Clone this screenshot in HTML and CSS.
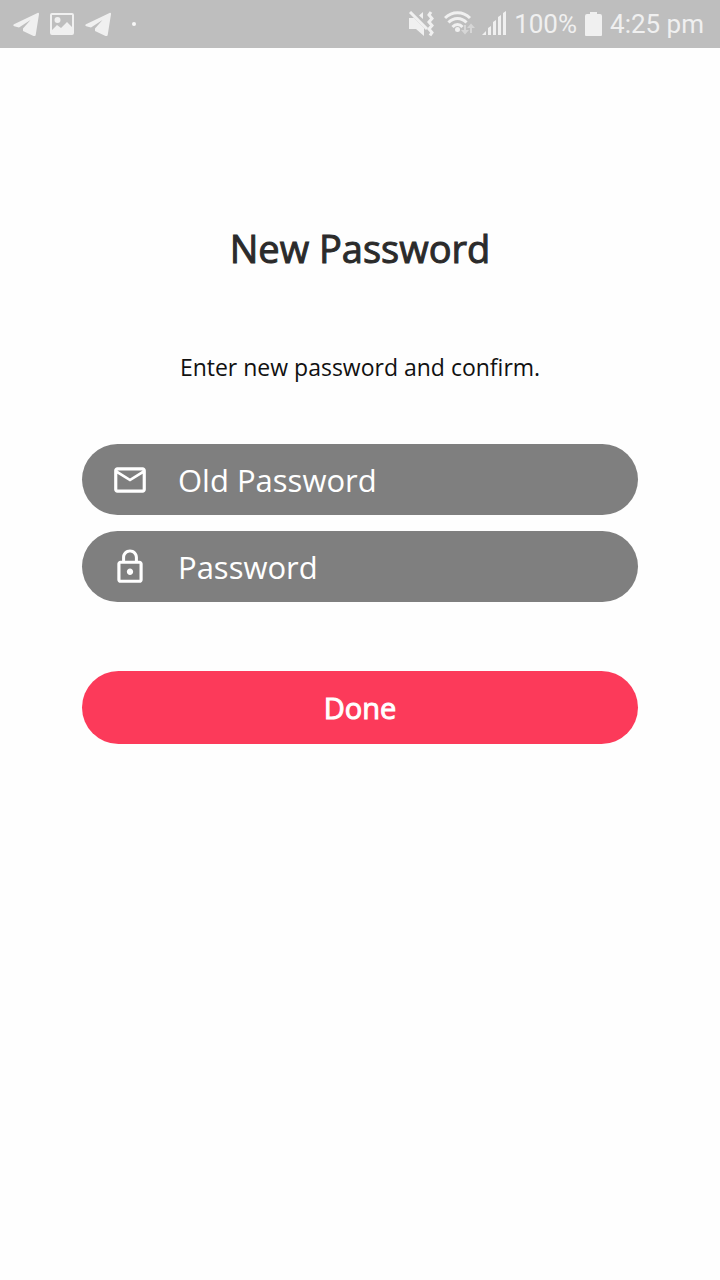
FILE: index.html
```
<!DOCTYPE html>
<html lang="en">
<head>
  <meta charset="UTF-8">
  <meta name="viewport" content="width=device-width, initial-scale=1.0">
  <title>New Password</title>
  <link rel="stylesheet" href="styles.css">
</head>
<body>
  <!-- Status bar -->
  <header class="status-bar">
    <div class="notifications">
      <svg width="26" height="24" viewBox="0 0 26 24" aria-hidden="true">
        <path d="M24.500 1 1 12.200c-1 .6-.9 1.800.2 2.100L6 15.500 17.500 8 10 16.500v2.500l10.500 5c1 .5 2 .1 2.200-1L26 2.200c.2-1-.5-1.600-1.500-1.200z"/>
      </svg>
      <svg width="24" height="24" viewBox="0 0 24 24" aria-hidden="true">
        <path fill-rule="evenodd" d="M2 1h20a2 2 0 0 1 2 2v18a2 2 0 0 1-2 2H2a2 2 0 0 1-2-2V3a2 2 0 0 1 2-2zm0 2v15l5-5 4 3 6-6 5 5V3z"/>
        <circle cx="7.500" cy="8" r="3"/>
      </svg>
      <svg width="26" height="24" viewBox="0 0 26 24" aria-hidden="true">
        <path d="M24.500 1 1 12.200c-1 .6-.9 1.800.2 2.100L6 15.500 17.500 8 10 16.500v2.500l10.500 5c1 .5 2 .1 2.200-1L26 2.200c.2-1-.5-1.600-1.500-1.200z"/>
      </svg>
      <span class="dot"></span>
    </div>
    <div class="system">
      <svg width="26" height="26" viewBox="0 0 26 26" aria-hidden="true">
        <path d="M1 7h5l10 10v8l-8-7H1zM15 1v7l-4-3.500z"/>
        <path class="line" d="m2 1 17 17"/>
        <path class="line" d="m23 1-2 3 3 3.500-3 3.500 3 3.500-3 3.500 3 3.500-2 3"/>
      </svg>
      <svg class="wifi" width="32" height="26" viewBox="0 0 32 26" aria-hidden="true">
        <path class="line" d="M1 7c7-7 18-7 25 0M4.500 11.500c5-5.500 13-5.500 18 0M8.500 16c3-3.500 7-3.500 10 0"/>
        <circle cx="13.500" cy="18.500" r="2.500"/>
        <path class="faint" d="M20 14h2v5h3l-4 4.500-4-4.500h3zM26 22h2v-5h3l-4-4.500-4 4.500h3z"/>
      </svg>
      <svg width="24" height="26" viewBox="0 0 24 26" aria-hidden="true">
        <path d="M0 24l4-4v4zM6 17l3-2v9H6zM11 11l3-2v15h-3zM16 6l3-2v20h-3zM21 2l3-2v24h-3z"/>
      </svg>
      <span class="battery-level">100%</span>
      <svg width="17" height="26" viewBox="0 0 17 26" aria-hidden="true">
        <path d="M5 1h7v2h3a2 2 0 0 1 2 2v19a1 1 0 0 1-1 1H1a1 1 0 0 1-1-1V5a2 2 0 0 1 2-2h3z"/>
      </svg>
      <time>4:25 pm</time>
    </div>
  </header>

  <main class="container">
    <h1>New Password</h1>
    <p class="hint">Enter new password and confirm.</p>

    <form>
      <div class="field">
        <label for="oldPassword">
          <svg width="38" height="38" viewBox="0 0 24 24" aria-hidden="true">
            <path d="M22 6c0-1.100-.9-2-2-2H4c-1.100 0-2 .9-2 2v12c0 1.100.9 2 2 2h16c1.100 0 2-.9 2-2V6zm-2 0-8 5-8-5h16zm0 12H4V8l8 5 8-5v10z"/>
          </svg>
        </label>
        <input type="password" id="oldPassword" placeholder="Old Password" aria-label="Old Password">
      </div>
      <div class="field">
        <label for="password">
          <svg width="38" height="38" viewBox="0 0 24 24" aria-hidden="true">
            <path d="M12 17c1.100 0 2-.9 2-2s-.9-2-2-2-2 .9-2 2 .9 2 2 2zm6-9h-1V6c0-2.760-2.240-5-5-5S7 3.240 7 6v2H6c-1.100 0-2 .9-2 2v10c0 1.100.9 2 2 2h12c1.100 0 2-.9 2-2V10c0-1.100-.9-2-2-2zM8.900 6c0-1.710 1.390-3.100 3.100-3.100s3.100 1.390 3.100 3.100v2H8.900V6zM18 20H6V10h12v10z"/>
          </svg>
        </label>
        <input type="password" id="password" placeholder="Password" aria-label="Password">
      </div>
      <button type="submit">Done</button>
    </form>
  </main>
</body>
</html>
```
FILE: styles.css
```
* {
  box-sizing: border-box;
}
body {
  margin: 0;
  background-color: #fefefe;
  font-family: "Open Sans", sans-serif;
}
.status-bar {
  display: flex;
  justify-content: space-between;
  align-items: center;
  height: 48px;
  padding: 0 16px 0 13px;
  background-color: #bebebe;
  color: #f0f0f0;
  font-family: Roboto, sans-serif;
  font-size: 26px;
}
.status-bar svg {
  fill: #f0f0f0;
}
.status-bar .line {
  fill: none;
  stroke: #f0f0f0;
  stroke-width: 3;
}
.status-bar .faint {
  fill: #d6d6d6;
}
.notifications,
.system {
  display: flex;
  align-items: center;
}
.notifications {
  gap: 11px;
}
.dot {
  width: 4px;
  height: 4px;
  margin-left: 10px;
  border-radius: 50%;
  background-color: #f8f8f8;
}
.system {
  gap: 8px;
}
.wifi {
  margin: 0 -2px 0 2px;
}
.container {
  padding: 172px 82px 40px;
}
h1 {
  margin: 0;
  color: #2b2b2b;
  font-size: 38px;
  font-weight: 400;
  line-height: 56px;
  text-align: center;
  -webkit-text-stroke: 1px;
}
.hint {
  margin: 75px 0 61px;
  color: #111;
  font-size: 23px;
  line-height: 32px;
  text-align: center;
}
.field {
  display: flex;
  align-items: center;
  height: 71px;
  margin-bottom: 16px;
  padding: 0 32px 0 28px;
  border-radius: 36px;
  background-color: #7f7f7f;
}
.field label {
  display: flex;
  justify-content: center;
  width: 40px;
  margin-right: 28px;
}
.field svg {
  fill: #fff;
}
.field input {
  flex: 1;
  min-width: 0;
  padding: 0;
  border: none;
  outline: none;
  background: none;
  color: #fff;
  font-family: inherit;
  font-size: 31px;
}
.field input::placeholder {
  color: #fff;
  opacity: 1;
}
button {
  width: 100%;
  height: 73px;
  margin-top: 53px;
  border: none;
  border-radius: 37px;
  background-color: #fc3a5a;
  color: #fff;
  font-family: inherit;
  font-size: 29px;
  -webkit-text-stroke: 1px;
  cursor: pointer;
}
```
